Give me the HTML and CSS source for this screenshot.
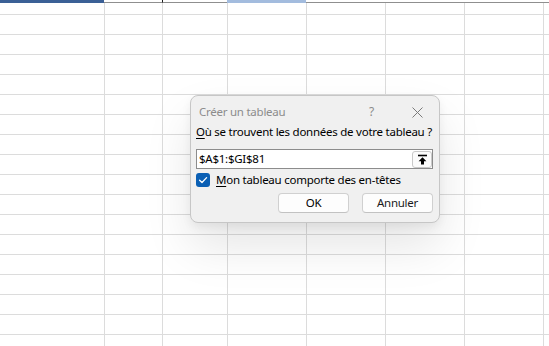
FILE: index.html
```html
<!DOCTYPE html>
<html lang="fr">
<head>
<meta charset="utf-8">
<title>Créer un tableau</title>
<link rel="stylesheet" href="styles.css">
</head>
<body>
<div class="sheet">
  <div class="colhead">
    <span class="hc hc-a"></span>
    <span class="hc hc-b"></span>
    <span class="hc hc-c"></span>
    <span class="hc hc-d"></span>
    <span class="hc hc-rest"></span>
  </div>
  <div class="cells"></div>
</div>

<div class="dialog" role="dialog" aria-label="Créer un tableau">
  <div class="titlebar">
    <span class="title">Créer un tableau</span>
    <span class="help">?</span>
    <svg class="close" width="11" height="11" viewBox="0 0 11 11" aria-hidden="true">
      <path d="M0.5 0.5 L10.5 10.5 M10.5 0.5 L0.5 10.5" stroke="#7a7a7a" stroke-width="1" fill="none"/>
    </svg>
  </div>
  <div class="body">
    <div class="prompt"><span class="u">O</span>ù se trouvent les données de votre tableau ?</div>
    <div class="field">
      <span class="value">$A$1:$GI$81</span>
      <span class="pick">
        <svg width="11" height="11" viewBox="0 0 11 11" aria-hidden="true">
          <path d="M1 1.5 H10" stroke="#000" stroke-width="1.6"/>
          <path d="M5.5 3.2 L1.6 7.2 H4 V10.5 H7 V7.2 H9.4 Z" fill="#000"/>
        </svg>
      </span>
    </div>
    <div class="check-row">
      <span class="checkbox">
        <svg width="10" height="10" viewBox="0 0 10 10" aria-hidden="true">
          <path d="M1.6 5.2 L4 7.5 L8.6 2.6" stroke="#fff" stroke-width="1.3" fill="none" stroke-linecap="round" stroke-linejoin="round"/>
        </svg>
      </span>
      <span class="check-label"><span class="u">M</span>on tableau comporte des en-têtes</span>
    </div>
    <div class="buttons">
      <span class="btn btn-ok">OK</span>
      <span class="btn">Annuler</span>
    </div>
  </div>
</div>
</body>
</html>
```

FILE: styles.css
```css
html, body {
  margin: 0;
  padding: 0;
  background: #ffffff;
  overflow: hidden;
}

body {
  width: 549px;
  height: 346px;
  font-family: "Segoe UI", "Noto Sans", "Open Sans", sans-serif;
  font-size: 11.5px;
  letter-spacing: -0.25px;
  color: #000;
}

.sheet {
  display: flex;
  flex-direction: column;
  height: 346px;
}

.colhead {
  display: flex;
  height: 3px;
  flex: none;
}

.hc {
  height: 2px;
  border-bottom: 1px solid #8f8f8f;
}

.hc-a { width: 104px; background: #3b6096; border-bottom-color: #3b6096; }
.hc-b { width: 58px; border-right: 1px solid #1a1a1a; }
.hc-c { width: 64px; }
.hc-d { width: 79px; background: #a3bcde; border-bottom-color: #a3bcde; }
.hc-rest { flex: 1; }

.cells {
  flex: 1;
  background-image:
    linear-gradient(to right,
      transparent 0 104px, #dcdcdc 104px 105px,
      transparent 105px 162px, #dcdcdc 162px 163px,
      transparent 163px 227px, #dcdcdc 227px 228px,
      transparent 228px 306px, #dcdcdc 306px 307px,
      transparent 307px 385px, #dcdcdc 385px 386px,
      transparent 386px 464px, #dcdcdc 464px 465px,
      transparent 465px 543px, #dcdcdc 543px 544px,
      transparent 544px),
    repeating-linear-gradient(to bottom,
      transparent 0 11px, #dcdcdc 11px 12px, transparent 12px 20px);
  background-size: 100% 100%, 100% 20px;
  background-repeat: no-repeat, repeat-y;
}

.dialog {
  position: absolute;
  left: 190px;
  top: 95px;
  width: 248px;
  height: 126px;
  background: #f0f0f0;
  border: 1px solid #c6c6c6;
  border-radius: 8px;
  box-shadow: 0 24px 48px rgba(0, 0, 0, 0.10), 0 4px 10px rgba(0, 0, 0, 0.06);
  display: flex;
  flex-direction: column;
}

.titlebar {
  display: flex;
  align-items: center;
  height: 16px;
  padding: 8px 16px 0 8px;
  line-height: 16px;
}

.title {
  flex: 1;
  color: #8c8c8c;
}

.help {
  color: #8c8c8c;
  font-size: 12px;
  margin-right: 38px;
}

.close {
  display: block;
}

.body {
  padding: 4px 6px 0 5px;
  display: flex;
  flex-direction: column;
}

.prompt {
  line-height: 16px;
  height: 16px;
  white-space: nowrap;
}

.u {
  text-decoration: underline;
  text-underline-offset: 2px;
}

.field {
  margin-top: 9px;
  display: flex;
  align-items: center;
  height: 18px;
  border: 1px solid #8c8c8c;
  background: #ffffff;
}

.value {
  flex: 1;
  padding-left: 2px;
  line-height: 16px;
}

.pick {
  width: 18px;
  height: 15px;
  border: 1px solid #c9c9c9;
  border-radius: 3px;
  background: #fbfbfb;
  display: flex;
  align-items: center;
  justify-content: center;
}

.pick svg { display: block; }

.check-row {
  margin-top: 3px;
  display: flex;
  align-items: center;
  height: 16px;
}

.checkbox {
  width: 14px;
  height: 14px;
  border-radius: 3px;
  background: #0a5fb4;
  display: flex;
  align-items: center;
  justify-content: center;
  margin-right: 6px;
}

.checkbox svg { display: block; }

.check-label {
  line-height: 16px;
  white-space: nowrap;
}

.buttons {
  margin-top: 5px;
  display: flex;
  justify-content: flex-end;
  gap: 13px;
}

.btn {
  width: 69px;
  height: 18px;
  border: 1px solid #d0d0d0;
  border-bottom-color: #c2c2c2;
  border-radius: 4px;
  background: #fdfdfd;
  display: flex;
  align-items: center;
  justify-content: center;
  line-height: 16px;
  color: #1b1b1b;
}

.btn-ok {
  color: #000;
}
```
